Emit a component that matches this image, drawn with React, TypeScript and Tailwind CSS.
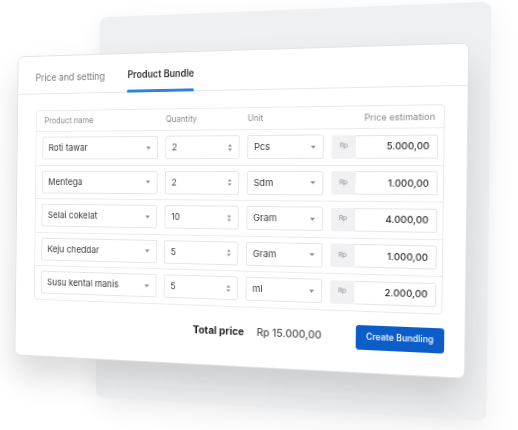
type BundleItem = {
  name: string
  qty: string
  unit: string
  price: string
}

const ITEMS: BundleItem[] = [
  { name: 'Roti tawar', qty: '2', unit: 'Pcs', price: '5.000,00' },
  { name: 'Mentega', qty: '2', unit: 'Sdm', price: '1.000,00' },
  { name: 'Selai cokelat', qty: '10', unit: 'Gram', price: '4.000,00' },
  { name: 'Keju cheddar', qty: '5', unit: 'Gram', price: '1.000,00' },
  { name: 'Susu kental manis', qty: '5', unit: 'ml', price: '2.000,00' },
]

// small filled triangle used by the dropdowns
function Caret() {
  return (
    <svg width="5" height="3" viewBox="0 0 5 3" className="shrink-0">
      <path d="M0 0h5L2.5 3z" fill="#8c8c8c" />
    </svg>
  )
}

// up/down arrows of the number field
function Stepper() {
  return (
    <svg width="4" height="7" viewBox="0 0 4 7" className="shrink-0">
      <path d="M2 0L4 2.6H0z M2 7L0 4.4h4z" fill="#8c8c8c" />
    </svg>
  )
}

function ItemRow({ item }: { item: BundleItem }) {
  return (
    <div className="grid h-[35.5px] grid-cols-[130px_79px_78px_103px] items-center gap-x-[8px] border-t border-[#ececec] pl-[7px] pr-[6px]">
      <div className="flex h-[24px] items-center justify-between rounded-[2px] border border-[#e6e6e6] pl-[6px] pr-[7px] text-[9.5px] text-[#3c3c3c]">
        <span>{item.name}</span>
        <Caret />
      </div>
      <div className="flex h-[24px] items-center justify-between rounded-[2px] border border-[#e6e6e6] pl-[6px] pr-[7px] text-[9.5px] text-[#3c3c3c]">
        <span>{item.qty}</span>
        <Stepper />
      </div>
      <div className="flex h-[24px] items-center justify-between rounded-[2px] border border-[#e6e6e6] pl-[6px] pr-[7px] text-[9.5px] text-[#3c3c3c]">
        <span>{item.unit}</span>
        <Caret />
      </div>
      <div className="flex h-[23px]">
        <div className="flex w-[24px] items-center justify-center rounded-l-[2px] bg-[#f1f1f3] text-[6.5px] text-[#8a8a8a]">
          Rp
        </div>
        <div className="flex flex-1 items-center justify-end rounded-r-[2px] border border-l-0 border-[#e6e6e6] pr-[7px] text-[9.5px] font-medium text-[#333]">
          {item.price}
        </div>
      </div>
    </div>
  )
}

export default function App() {
  return (
    <div className="h-[430px] w-[518px] overflow-hidden bg-white [font-family:Inter,sans-serif]">
      {/* both cards share one tilted plane */}
      <div className="relative ml-[-11px] h-[430px] w-[540px] pl-[96px] pt-[11px] [transform:perspective(1000px)_rotateY(-14.6deg)_rotateZ(0.7deg)]">
        <div className="h-[396px] w-[398px] rounded-[8px] bg-[#eff0f2] shadow-[0_10px_28px_rgba(0,0,0,0.07)]" />

        <div className="absolute left-[2px] top-[49px] flex h-[319px] w-[472px] flex-col rounded-[7px] border border-[#e3e3e3] bg-white shadow-[0_20px_34px_rgba(0,0,0,0.15)]">
          {/* tabs */}
          <div className="flex h-[40px] shrink-0 gap-[25px] border-b border-[#e8e8e8] px-[20px]">
            <div className="flex items-center pt-[5px] text-[10px] text-[#767676]">Price and setting</div>
            <div className="relative flex items-center pt-[5px] text-[9.8px] font-semibold text-[#2f2f2f]">
              Product Bundle
              <span className="absolute bottom-[-1px] left-0 right-0 h-[3px] rounded-full bg-[#2b83e0]" />
            </div>
          </div>

          <div className="flex flex-1 flex-col pl-[21px] pr-[21px] pt-[17px]">
            <div className="rounded-[3px] border border-[#ebebeb]">
              <div className="grid h-[21px] grid-cols-[130px_79px_78px_103px] items-center gap-x-[8px] pl-[7px] pr-[6px] text-[8.5px] text-[#8a8a8a]">
                <span className="pl-[2px]">Product name</span>
                <span>Quantity</span>
                <span>Unit</span>
                <span className="pr-[3px] text-right text-[9px]">Price estimation</span>
              </div>
              {ITEMS.map((item) => (
                <ItemRow key={item.name} item={item} />
              ))}
            </div>

            <div className="mt-[13px] flex items-center justify-end">
              <span className="text-[10.5px] font-bold text-[#262626]">Total price</span>
              <span className="ml-[13px] text-[10.5px] font-medium text-[#555]">Rp 15.000,00</span>
              <button className="ml-[34px] mr-[-2px] flex h-[24px] w-[85px] items-center justify-center rounded-[3px] bg-[#0b5ec9] text-[8.5px] font-medium text-white">
                Create Bundling
              </button>
            </div>
          </div>
        </div>
      </div>
    </div>
  )
}
